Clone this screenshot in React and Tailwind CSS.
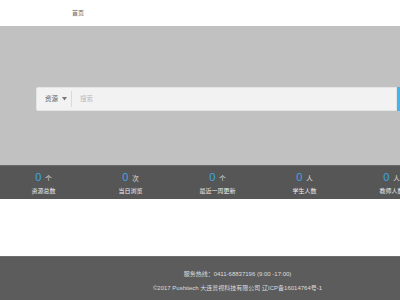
import React from 'react';

const stats = [
  { num: '0', unit: '个', label: '资源总数' },
  { num: '0', unit: '次', label: '当日浏览' },
  { num: '0', unit: '个', label: '最近一周更新' },
  { num: '0', unit: '人', label: '学生人数' },
  { num: '0', unit: '人', label: '教师人数' },
];

const App = () => {
  return (
    <div className="w-[400px] h-[300px] overflow-hidden bg-white font-['Liberation_Sans','Noto_Sans_CJK_SC',sans-serif]">
      {/* Header */}
      <div className="h-[26px] bg-white flex items-center">
        <span className="ml-[72px] mt-[1px] text-[6px] text-[#666]">首页</span>
      </div>

      {/* Search banner */}
      <div className="h-[139px] bg-[#c1c1c1] pt-[61px]">
        <div className="ml-[36px] w-[404px] h-[24px] flex">
          <div className="flex-1 flex items-center bg-[#f2f2f2] border border-[#e4e4e4] rounded-l-[2px]">
            <div className="flex items-center pl-[8px] pr-[4px] h-[16px] border-r border-[#dadada]">
              <span className="text-[6.5px] text-[#666]">资源</span>
              <svg className="ml-[4px] w-[5px] h-[4px]" viewBox="0 0 5 4">
                <path d="M0 0 L5 0 L2.5 3.5 Z" fill="#777" />
              </svg>
            </div>
            <span className="ml-[8px] text-[6.5px] text-[#bbb]">搜索</span>
          </div>
          <div className="w-[43px] h-full bg-[#45b4e8]"></div>
        </div>
      </div>

      {/* Stats */}
      <div className="h-[34px] bg-[#565656] border-t border-[#6a6a6a] flex">
        {stats.map((s, i) => (
          <div key={i} className="w-[87px] shrink-0 flex flex-col items-center pt-[6px]">
            <div className="flex items-end leading-none">
              <span className="text-[11px] text-[#3ea4e4]">{s.num}</span>
              <span className="ml-[4px] mb-[1px] text-[6.5px] text-[#ddd]">{s.unit}</span>
            </div>
            <span className="mt-[5px] text-[6px] text-[#eee] leading-none">{s.label}</span>
          </div>
        ))}
      </div>

      {/* Spacer */}
      <div className="h-[57px] bg-white"></div>

      {/* Footer */}
      <div className="h-[44px] bg-[#5c5c5c] border-t border-[#6e6e6e] w-[475px] flex flex-col items-center pt-[14px] text-[6px] text-[#ddd] leading-none">
        <span>服务热线：0411-68837196 (9:00 -17:00)</span>
        <span className="mt-[8px]">©2017 Pushitech 大连普视科技有限公司 辽ICP备16014764号-1</span>
      </div>
    </div>
  );
};

export default App;
